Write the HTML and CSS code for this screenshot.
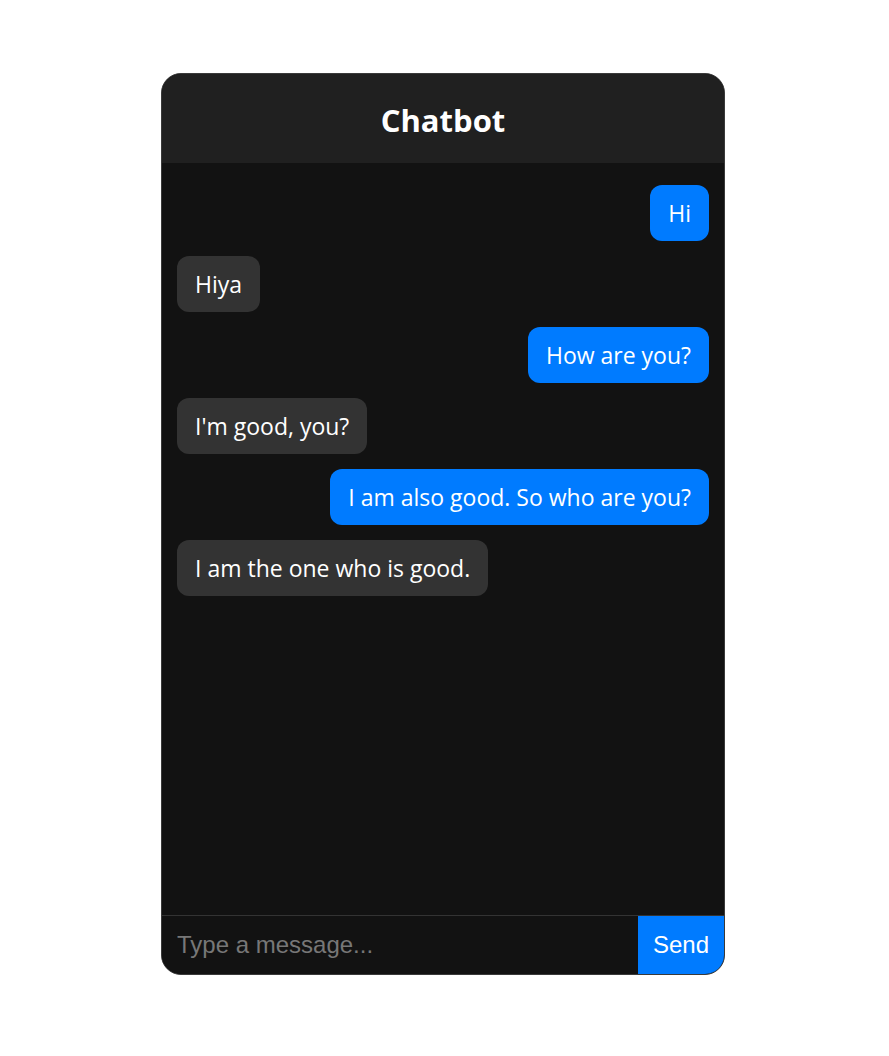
FILE: index.html
```html
<!DOCTYPE html>
<html lang="en">
<head>
<meta charset="utf-8">
<title>Chatbot</title>
<link rel="stylesheet" href="styles.css">
</head>
<body>
<div class="page">
  <div class="chat">
    <header class="chat-header"><h1 class="chat-title">Chatbot</h1></header>
    <main class="messages">
      <div class="msg msg-user">Hi</div>
      <div class="msg msg-bot">Hiya</div>
      <div class="msg msg-user">How are you?</div>
      <div class="msg msg-bot">I'm good, you?</div>
      <div class="msg msg-user">I am also good. So who are you?</div>
      <div class="msg msg-bot">I am the one who is good.</div>
    </main>
    <form class="composer">
      <input class="composer-input" type="text" placeholder="Type a message...">
      <button class="composer-send" type="button">Send</button>
    </form>
  </div>
</div>
</body>
</html>
```

FILE: styles.css
```css
html, body {
  margin: 0;
  padding: 0;
  background: #ffffff;
}

.page {
  display: flex;
  justify-content: center;
  padding-top: 73px;
}

.chat {
  width: 562px;
  height: 900px;
  margin-left: -3px;
  border: 1px solid #3a3a3a;
  border-radius: 20px;
  overflow: hidden;
  display: flex;
  flex-direction: column;
  background: #121212;
  font-family: "Open Sans", "Noto Sans", sans-serif;
}

.chat-header {
  height: 89px;
  background: #202020;
  display: flex;
  align-items: center;
  justify-content: center;
  flex-shrink: 0;
}

.chat-title {
  margin: 2px 0 0;
  color: #ffffff;
  font-size: 31px;
  font-weight: 700;
}

.messages {
  flex: 1;
  display: flex;
  flex-direction: column;
  gap: 15px;
  padding: 22px 15px 15px;
}

.msg {
  max-width: 75%;
  padding: 15px 18px;
  line-height: 26px;
  font-size: 23px;
  color: #ffffff;
  border-radius: 12px;
}

.msg-user {
  align-self: flex-end;
  background: #007bff;
}

.msg-bot {
  align-self: flex-start;
  background: #333333;
}

.composer {
  display: flex;
  height: 58px;
  border-top: 1px solid #333333;
  flex-shrink: 0;
  margin: 0;
}

.composer-input {
  flex: 1;
  min-width: 0;
  border: none;
  outline: none;
  background: #121212;
  color: #ffffff;
  padding: 0 15px;
  font-family: "Liberation Sans", Arial, sans-serif;
  font-size: 24px;
}

.composer-input::placeholder {
  color: #777777;
}

.composer-send {
  width: 86px;
  border: none;
  background: #007bff;
  color: #ffffff;
  font-family: "Liberation Sans", Arial, sans-serif;
  font-size: 24px;
  padding: 0;
}
```
